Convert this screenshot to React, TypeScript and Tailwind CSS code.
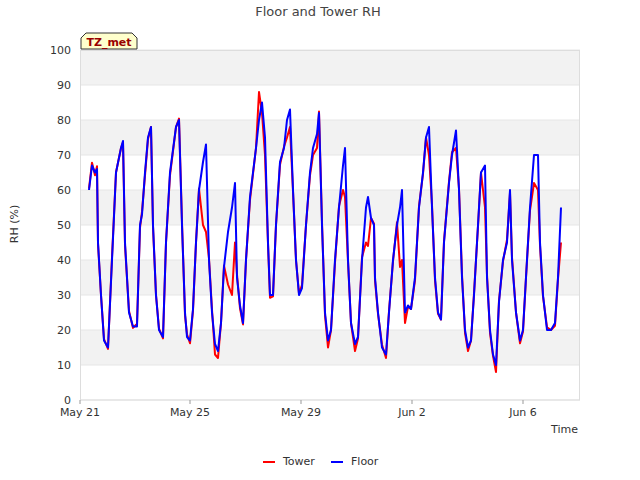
const blue: [number, number][] = [[89,60],[92,67],[95,65],[97,66],[98,45],[101,30],[104,17],[108,15],[112,40],[116,65],[121,72],[123,74],[125,45],[129,25],[133,21],[137,21],[140,50],[142,53],[145,65],[148,75],[151,78],[153,50],[156,30],[159,20],[163,18],[166,45],[170,65],[176,78],[179,80],[182,50],[185,25],[187,18],[190,17],[193,26],[196,45],[199,60],[203,68],[206,73],[209,40],[212,25],[215,16],[218,14],[221,22],[224,38],[228,48],[232,55],[235,62],[237,35],[240,27],[243,22],[246,40],[250,58],[253,65],[256,72],[259,80],[262,85],[265,75],[268,45],[270,30],[273,30],[276,50],[280,68],[284,72],[287,80],[290,83],[293,60],[296,40],[299,30],[302,32],[306,50],[310,65],[313,72],[317,76],[319,82],[322,50],[325,25],[328,17],[331,20],[335,40],[339,55],[343,67],[345,72],[348,40],[351,22],[355,16],[358,18],[362,40],[366,55],[368,58],[371,52],[374,50],[375,35],[378,25],[382,15],[386,13],[389,25],[393,40],[397,50],[400,55],[402,60],[405,25],[408,27],[411,26],[415,35],[419,55],[423,65],[426,75],[429,78],[432,55],[435,35],[438,25],[441,23],[444,45],[449,62],[452,70],[456,77],[459,60],[462,35],[465,20],[468,15],[471,17],[474,30],[478,50],[481,65],[485,67],[487,35],[490,20],[493,13],[496,10],[499,28],[503,40],[507,45],[510,60],[512,40],[516,25],[520,17],[523,20],[526,35],[530,55],[534,70],[538,70],[540,45],[543,30],[547,20],[551,20],[555,22],[558,35],[561,55]];
const redOv: Record<number, number> = {203:50,206:48,215:13,218:12,228:33,232:30,235:45,259:88,261:94,262:82,265:70,287:75,290:78,313:70,317:72,328:15,343:60,345:58,355:14,366:45,368:44,386:12,400:38,402:40,405:22,429:70,456:72,468:14,485:55,496:8,534:62,538:60,561:45};
const red = blue.map(([x, v]) => [x, redOv[x] ?? v + ((x * 7) % 5 - 2) * 0.4] as [number, number]);
const pts = (d: [number, number][]) => d.map(([x, v]) => `${x},${(400 - v * 3.5).toFixed(1)}`).join(" ");
const F = "DejaVu Sans, sans-serif";

export default function App() {
  const ys = [0,10,20,30,40,50,60,70,80,90,100];
  const xt: [number, string][] = [[80,"May 21"],[190,"May 25"],[301,"May 29"],[412,"Jun 2"],[523,"Jun 6"]];
  return (
    <div className="w-[640px] h-[480px] bg-white">
      <svg width="640" height="480" fontFamily={F}>
        <text x="318" y="16" textAnchor="middle" fontSize="13" fill="#444">Floor and Tower RH</text>
        {[1,3,5,7,9].map(i => <rect key={i} x="80" y={400 - (i + 1) * 35} width="500" height="35" fill="#f2f2f2" />)}
        {ys.map(v => <line key={v} x1="80" x2="580" y1={400 - v * 3.5} y2={400 - v * 3.5} stroke="#e6e6e6" />)}
        <rect x="80.5" y="50.5" width="499" height="349.5" fill="none" stroke="#ddd" />
        {ys.map(v => <text key={v} x="71" y={404 - v * 3.5} textAnchor="end" fontSize="11" fill="#333">{v}</text>)}
        {xt.map(([x, l]) => <g key={l}><line x1={x} x2={x} y1="400" y2="404" stroke="#999" /><text x={x} y="416" textAnchor="middle" fontSize="11" fill="#333">{l}</text></g>)}
        <text x="578" y="433" textAnchor="end" fontSize="11" fill="#333">Time</text>
        <text transform="translate(18 224) rotate(-90)" textAnchor="middle" fontSize="11" fill="#333">RH (%)</text>
        <polyline points={pts(red)} fill="none" stroke="#ff0000" strokeWidth="2" strokeLinejoin="round" />
        <polyline points={pts(blue)} fill="none" stroke="#0000ff" strokeWidth="2" strokeLinejoin="round" />
        <path d="M81,49 L81,38 L86,33 L132,33 L137,38 L137,49 Z" fill="#ffffcc" stroke="#333" />
        <text x="109" y="46" textAnchor="middle" fontSize="11" fontWeight="bold" fill="#990000">TZ_met</text>
        <line x1="263" x2="275" y1="462" y2="462" stroke="#ff0000" strokeWidth="2" />
        <text x="283" y="465" fontSize="11" fill="#333">Tower</text>
        <line x1="331" x2="343" y1="462" y2="462" stroke="#0000ff" strokeWidth="2" />
        <text x="351" y="465" fontSize="11" fill="#333">Floor</text>
      </svg>
    </div>
  );
}
